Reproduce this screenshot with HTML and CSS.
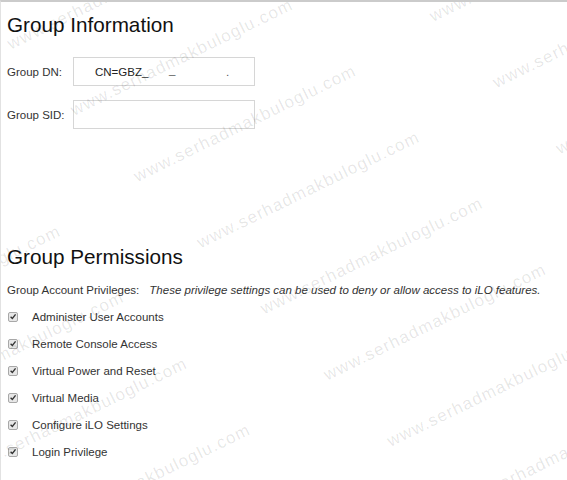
FILE: index.html
```html
<!DOCTYPE html>
<html>
<head>
<meta charset="utf-8">
<title>Group Information</title>
<link rel="stylesheet" href="styles.css">
</head>
<body>
<div class="page">
  <h1 class="heading first">Group Information</h1>
  <div class="form">
    <div class="form-row">
      <label class="form-label">Group DN:</label>
      <div class="field"><span class="field-value">CN=GBZ_</span><span class="mark mark-a">_</span><span class="mark mark-b">.</span></div>
    </div>
    <div class="form-row">
      <label class="form-label">Group SID:</label>
      <div class="field field-sid"></div>
    </div>
  </div>

  <h1 class="heading second">Group Permissions</h1>
  <div class="priv-row">
    <span class="priv-label">Group Account Privileges:</span>
    <span class="priv-note">These privilege settings can be used to deny or allow access to iLO features.</span>
  </div>
  <ul class="checks">
    <li class="check-row"><span class="cb"><svg viewBox="0 0 10 10" width="10" height="10"><path d="M2 5.2 L4.2 7.4 L8.2 2.4" fill="none" stroke="#333" stroke-width="1.7"/></svg></span>Administer User Accounts</li>
    <li class="check-row"><span class="cb"><svg viewBox="0 0 10 10" width="10" height="10"><path d="M2 5.2 L4.2 7.4 L8.2 2.4" fill="none" stroke="#333" stroke-width="1.7"/></svg></span>Remote Console Access</li>
    <li class="check-row"><span class="cb"><svg viewBox="0 0 10 10" width="10" height="10"><path d="M2 5.2 L4.2 7.4 L8.2 2.4" fill="none" stroke="#333" stroke-width="1.7"/></svg></span>Virtual Power and Reset</li>
    <li class="check-row"><span class="cb"><svg viewBox="0 0 10 10" width="10" height="10"><path d="M2 5.2 L4.2 7.4 L8.2 2.4" fill="none" stroke="#333" stroke-width="1.7"/></svg></span>Virtual Media</li>
    <li class="check-row"><span class="cb"><svg viewBox="0 0 10 10" width="10" height="10"><path d="M2 5.2 L4.2 7.4 L8.2 2.4" fill="none" stroke="#333" stroke-width="1.7"/></svg></span>Configure iLO Settings</li>
    <li class="check-row"><span class="cb"><svg viewBox="0 0 10 10" width="10" height="10"><path d="M2 5.2 L4.2 7.4 L8.2 2.4" fill="none" stroke="#333" stroke-width="1.7"/></svg></span>Login Privilege</li>
  </ul>

  <svg class="watermark" width="567" height="480" viewBox="0 0 567 480" aria-hidden="true">
    <text x="10.7" y="49.8" transform="rotate(-26 10.7 49.8)">www.serhadmakbuloglu.com</text>
    <text x="74" y="116" transform="rotate(-26 74 116)">www.serhadmakbuloglu.com</text>
    <text x="137.3" y="182.2" transform="rotate(-26 137.3 182.2)">www.serhadmakbuloglu.com</text>
    <text x="200.6" y="248.4" transform="rotate(-26 200.6 248.4)">www.serhadmakbuloglu.com</text>
    <text x="263.9" y="314.6" transform="rotate(-26 263.9 314.6)">www.serhadmakbuloglu.com</text>
    <text x="327.2" y="380.8" transform="rotate(-26 327.2 380.8)">www.serhadmakbuloglu.com</text>
    <text x="390.5" y="447" transform="rotate(-26 390.5 447)">www.serhadmakbuloglu.com</text>
    <text x="453.8" y="513.2" transform="rotate(-26 453.8 513.2)">www.serhadmakbuloglu.com</text>
    <text x="433" y="22" transform="rotate(-26 433 22)">www.serhadmakbuloglu.com</text>
    <text x="496.3" y="88.2" transform="rotate(-26 496.3 88.2)">www.serhadmakbuloglu.com</text>
    <text x="559.6" y="154.4" transform="rotate(-26 559.6 154.4)">www.serhadmakbuloglu.com</text>
    <text x="-221.7" y="276.2" transform="rotate(-26 -221.7 276.2)">www.serhadmakbuloglu.com</text>
    <text x="-158.4" y="342.4" transform="rotate(-26 -158.4 342.4)">www.serhadmakbuloglu.com</text>
    <text x="-95.1" y="408.6" transform="rotate(-26 -95.1 408.6)">www.serhadmakbuloglu.com</text>
    <text x="-31.8" y="474.8" transform="rotate(-26 -31.8 474.8)">www.serhadmakbuloglu.com</text>
    <text x="31.5" y="541" transform="rotate(-26 31.5 541)">www.serhadmakbuloglu.com</text>
  </svg>
</div>
</body>
</html>
```

FILE: styles.css
```css
html, body {
  margin: 0;
  padding: 0;
  background: #ffffff;
}

body {
  font-family: "Liberation Sans", Arial, sans-serif;
  color: #333333;
  font-size: 11.5px;
}

.page {
  position: relative;
  height: 480px;
  box-sizing: border-box;
  overflow: hidden;
  border-top: 2px solid #cbcbcb;
  border-left: 1px solid #e2e2e2;
  padding-left: 6px;
}

.heading {
  font-size: 20.7px;
  font-weight: normal;
  line-height: 24px;
  color: #111111;
  margin: 0;
}

.heading.first {
  margin-top: 11px;
}

.heading.second {
  margin-top: 116px;
  margin-bottom: 7px;
}

.form {
  display: flex;
  flex-direction: column;
  gap: 14px;
  margin-top: 20px;
}

.form-row {
  display: flex;
  align-items: center;
}

.form-label {
  width: 66px;
  flex: none;
}

.field {
  position: relative;
  width: 182px;
  height: 29px;
  box-sizing: border-box;
  border: 1px solid #d6d6d6;
  display: flex;
  align-items: center;
  padding-left: 21px;
  font-size: 11.5px;
  color: #222222;
}

.mark {
  position: absolute;
  color: #555555;
}

.mark-a {
  left: 95px;
  top: 6px;
}

.mark-b {
  left: 152px;
  top: 8px;
}

.priv-row {
  display: flex;
  align-items: center;
  height: 27px;
  gap: 10px;
}

.priv-note {
  font-style: italic;
}

.checks {
  list-style: none;
  margin: 0;
  padding: 0;
}

.check-row {
  display: flex;
  align-items: center;
  height: 27px;
}

.cb {
  width: 10px;
  height: 10px;
  box-sizing: border-box;
  border: 1px solid #a8a8a8;
  border-radius: 2px;
  background: #e7e7e7;
  margin-left: 1px;
  margin-right: 14px;
  display: flex;
  align-items: center;
  justify-content: center;
  flex: none;
}

.cb svg {
  display: block;
  width: 9px;
  height: 9px;
}

.watermark {
  position: absolute;
  left: -1px;
  top: -2px;
  pointer-events: none;
}

.watermark text {
  font-family: "Liberation Sans", Arial, sans-serif;
  font-size: 17px;
  letter-spacing: 1.2px;
  fill: #000000;
  fill-opacity: 0.1;
}
```
